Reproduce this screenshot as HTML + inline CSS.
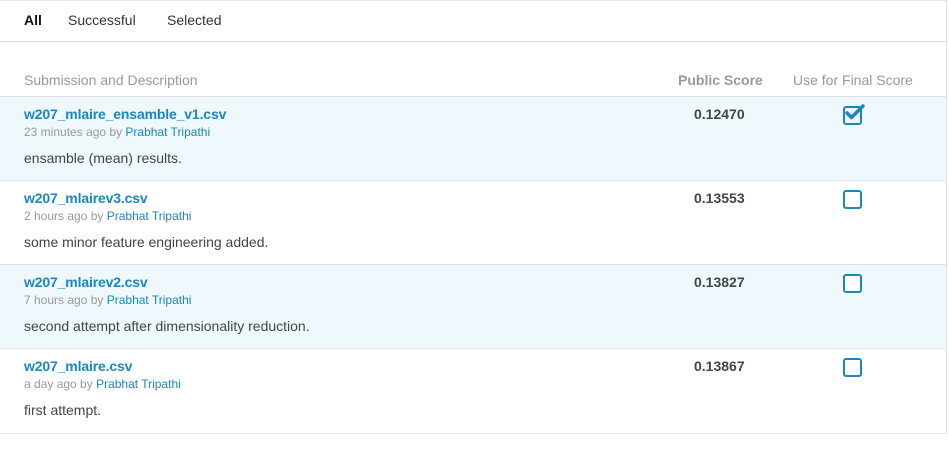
<!DOCTYPE html>
<html><head><meta charset="utf-8"><style>
body{margin:0;background:#fff;font-family:"Liberation Sans",sans-serif;width:949px;height:452px;overflow:hidden;position:relative}
.frame{position:absolute;left:0;top:0;width:946px;height:432px;border-top:1px solid #e6e6e6;border-right:1px solid #e0e0e0;border-bottom:1px solid #e6e6e6}
.tabs{position:absolute;top:0;left:0;width:946px;height:41px;border-bottom:1px solid #dcdcdc}
.tab{position:absolute;top:12px;font-size:14px;color:#333}
.hdr{position:absolute;top:72px;font-size:14px;color:#999}
.row{position:absolute;left:0;width:946px;height:83px;border-top:1px solid #e3e3e3}
.blue{background:#eef8fd}
.t{position:absolute;left:24px;top:9px;font-size:14px;font-weight:bold;color:#1c86bf;letter-spacing:-0.15px}
.m{position:absolute;left:24px;top:28px;font-size:12px;color:#999}
.m span{color:#1c86bf}
.d{position:absolute;left:24px;top:53px;font-size:14px;color:#444}
.s{position:absolute;left:694px;top:9px;font-size:14px;font-weight:bold;color:#444}
.cb{position:absolute;left:843px;top:9px;width:15px;height:15px;border:2px solid #1c86bf;border-radius:3px;background:#fff}
</style></head><body>
<div class="frame"></div>
<div class="tabs">
<div class="tab" style="left:24px;font-weight:bold;color:#111">All</div>
<div class="tab" style="left:68px">Successful</div>
<div class="tab" style="left:167px">Selected</div>
</div>
<div class="hdr" style="left:24px">Submission and Description</div>
<div class="hdr" style="left:678px;font-weight:bold">Public Score</div>
<div class="hdr" style="left:793px">Use for Final Score</div>

<div class="row blue" style="top:96px"><div class="t">w207_mlaire_ensamble_v1.csv</div><div class="m">23 minutes ago by <span>Prabhat Tripathi</span></div><div class="d">ensamble (mean) results.</div><div class="s">0.12470</div>
<div class="cb" style="background:#eef8fd"></div><svg style="position:absolute;left:843px;top:6px" width="24" height="20" viewBox="0 0 24 20"><path d="M4 10 L8.5 14.5 L20 3" stroke="#1c86bf" stroke-width="3.5" fill="none" stroke-linecap="round" stroke-linejoin="round"/></svg></div>
<div class="row" style="top:180px"><div class="t">w207_mlairev3.csv</div><div class="m">2 hours ago by <span>Prabhat Tripathi</span></div><div class="d">some minor feature engineering added.</div><div class="s">0.13553</div><div class="cb"></div></div>
<div class="row blue" style="top:264px"><div class="t">w207_mlairev2.csv</div><div class="m">7 hours ago by <span>Prabhat Tripathi</span></div><div class="d">second attempt after dimensionality reduction.</div><div class="s">0.13827</div><div class="cb"></div></div>
<div class="row" style="top:348px"><div class="t">w207_mlaire.csv</div><div class="m">a day ago by <span>Prabhat Tripathi</span></div><div class="d">first attempt.</div><div class="s">0.13867</div><div class="cb"></div></div>
</body></html>
